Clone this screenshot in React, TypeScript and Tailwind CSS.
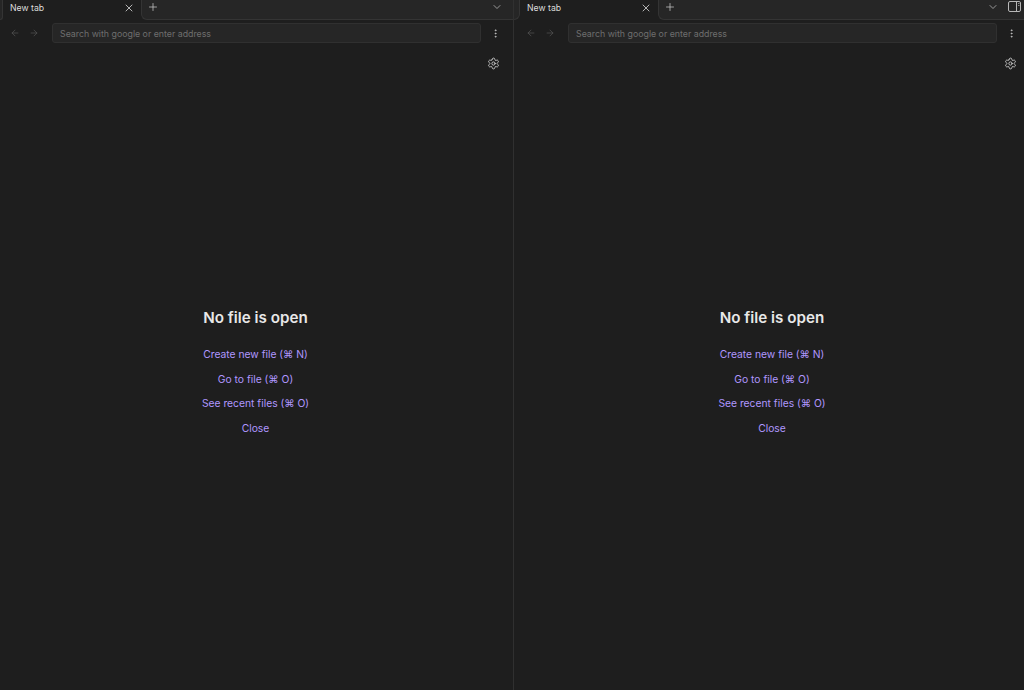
import { ArrowLeft, ArrowRight, ChevronDown, EllipsisVertical, Plus, Settings, X } from "lucide-react";

const links = ["Create new file (⌘ N)", "Go to file (⌘ O)", "See recent files (⌘ O)", "Close"];

function Pane({ side }: { side: "left" | "right" }) {
  const left = side === "left";
  return (
    <div className={left ? "w-[513px] shrink-0 flex flex-col" : "flex-1 min-w-0 flex flex-col"}>
      <div className="flex h-5 shrink-0">
        <div
          className={
            left
              ? "w-[3px] bg-[#262626] border-r border-b border-[#343434] rounded-br-md"
              : "w-[6px] bg-[#262626] border-r border-b border-[#343434] rounded-br-md"
          }
        />
        <div className="w-[138px] flex items-center pl-[7px] pr-[6px] pb-[4px]">
          <span className="flex-1 text-[8.7px] leading-none text-[#dcdcdc]">New tab</span>
          <X size={12} strokeWidth={1.6} className="text-[#dcdcdc]" />
        </div>
        <div className="flex-1 flex items-start bg-[#262626] border-l border-b border-[#343434] rounded-bl-md">
          <Plus size={12} strokeWidth={1.5} className="text-[#c8c8c8] ml-[5px] mt-[1px]" />
          <div className="flex-1" />
          {left ? (
            <ChevronDown size={12} strokeWidth={1.6} className="text-[#b4b4b4] mr-[10px] mt-[1px]" />
          ) : (
            <>
              <ChevronDown size={12} strokeWidth={1.6} className="text-[#b4b4b4] mr-[9px] mt-[1px]" />
              <svg width="13" height="11" viewBox="0 0 13 11" fill="none" className="mr-[3px] mt-[1px] text-[#b8b8b8]">
                <rect x="0.5" y="0.5" width="12" height="10" rx="1.5" stroke="currentColor" />
                <path d="M8.5 0.5V10.5" stroke="currentColor" />
                <path d="M10 2.5H11.5M10 4.5H11.5" stroke="currentColor" strokeOpacity="0.7" />
              </svg>
            </>
          )}
        </div>
      </div>
      <div className={left ? "flex items-center h-[26px] shrink-0 pl-[10px] pr-[12px]" : "flex items-center h-[26px] shrink-0 pl-[12px] pr-[7px]"}>
        <ArrowLeft size={10} strokeWidth={1.5} className="text-[#5c5c5c]" />
        <ArrowRight size={10} strokeWidth={1.5} className="text-[#5c5c5c] ml-[9px]" />
        <div className="flex-1 h-[20px] ml-[13px] mr-[9px] flex items-center pl-[7px] pt-[1px] rounded-[3px] bg-[#262626] border border-[#303030]">
          <span className="text-[8.8px] text-[#6e6e6e]">Search with google or enter address</span>
        </div>
        <EllipsisVertical size={11} strokeWidth={1.8} className="text-[#c8c8c8]" />
      </div>
      <div className={left ? "flex justify-end pr-[13px] pt-[11px]" : "flex justify-end pr-[7px] pt-[11px]"}>
        <Settings size={13} strokeWidth={1.5} className="text-[#dcdcdc]" />
      </div>
      <div className={left ? "flex flex-col items-center pt-[238px] pr-[2px]" : "flex flex-col items-center pt-[238px] pl-[6px]"}>
        <h1 className="text-[15.2px] leading-[20px] font-semibold text-[#e8e8e8]">No file is open</h1>
        <div className="flex flex-col items-center mt-[14px]">
          {links.map((l) => (
            <a key={l} className="text-[10.3px] leading-[24.5px] text-[#b097ff]">
              {l}
            </a>
          ))}
        </div>
      </div>
    </div>
  );
}

export default function App() {
  return (
    <div className="w-[1024px] h-[690px] overflow-hidden flex bg-[#1e1e1e] font-['Inter','Noto_Sans',sans-serif]">
      <Pane side="left" />
      <div className="w-px shrink-0 bg-[#303030]" />
      <Pane side="right" />
    </div>
  );
}
